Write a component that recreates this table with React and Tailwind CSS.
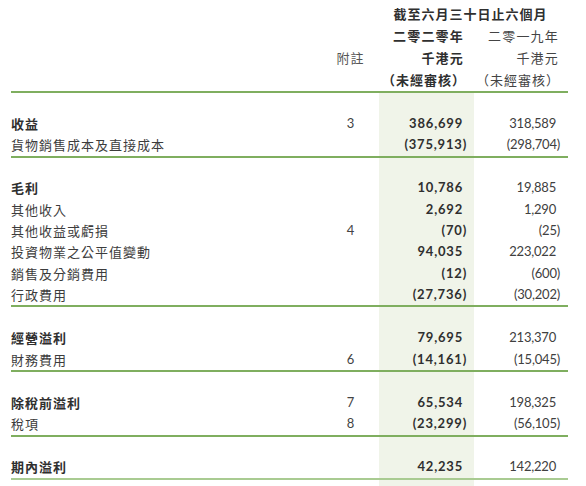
const rows = [
  { spacer: true },
  { label: '收益', note: '3', cur: '386,699', prev: '318,589', bold: true },
  { label: '貨物銷售成本及直接成本', cur: '(375,913)', prev: '(298,704)', line: 'dark' },
  { spacer: true },
  { label: '毛利', cur: '10,786', prev: '19,885', bold: true },
  { label: '其他收入', cur: '2,692', prev: '1,290' },
  { label: '其他收益或虧損', note: '4', cur: '(70)', prev: '(25)' },
  { label: '投資物業之公平值變動', cur: '94,035', prev: '223,022' },
  { label: '銷售及分銷費用', cur: '(12)', prev: '(600)' },
  { label: '行政費用', cur: '(27,736)', prev: '(30,202)', line: 'dark' },
  { spacer: true },
  { label: '經營溢利', cur: '79,695', prev: '213,370', bold: true },
  { label: '財務費用', note: '6', cur: '(14,161)', prev: '(15,045)', line: 'dark' },
  { spacer: true },
  { label: '除稅前溢利', note: '7', cur: '65,534', prev: '198,325', bold: true },
  { label: '稅項', note: '8', cur: '(23,299)', prev: '(56,105)', line: 'dark' },
  { spacer: true },
  { label: '期內溢利', cur: '42,235', prev: '142,220', bold: true, line: 'light' },
  { spacer: true, tail: true },
]

const cjk = "font-['Noto_Sans_CJK_TC','Noto_Sans_CJK_SC',sans-serif]"
const num = "font-['Lato','Open_Sans',sans-serif]"

// paren values hang a bit to the right
const Num = ({ v, bold }) => {
  const paren = v.startsWith('(')
  return (
    <span className={`${num} text-[13px] ${bold ? 'font-bold tracking-[0.8px] text-[#2f2f2f]' : 'text-[#404040] tracking-[-0.2px]'} ${paren ? '' : 'pr-[4px]'}`}>
      {v}
    </span>
  )
}

const Row = ({ r }) => {
  if (r.spacer) {
    return (
      <div className={`grid grid-cols-[309px_59px_95px_94px] ${r.tail ? 'h-[10px]' : 'h-[20px]'}`}>
        <div />
        <div />
        <div className="bg-[#f0f4e9]" />
        <div />
      </div>
    )
  }
  const border =
    r.line === 'dark' ? 'border-b-2 border-[#7fae5f]' : r.line === 'light' ? 'border-b-2 border-[#a9cb92]' : ''
  return (
    <div className={`grid grid-cols-[309px_59px_95px_94px] ${border}`}>
      <div className={`${cjk} h-[21.3px] flex items-center text-[13px] tracking-[1px] ${r.bold ? 'font-bold text-[#2f2f2f]' : 'text-[#3c3c3c]'}`}>
        {r.label}
      </div>
      <div className={`${num} flex items-center justify-center text-[13px] text-[#444] pl-[2px]`}>{r.note}</div>
      <div className="bg-[#f0f4e9] flex items-center justify-end pr-[7px]">
        <Num v={r.cur} bold />
      </div>
      <div className="flex items-center justify-end pr-[8px]">
        <Num v={r.prev} />
      </div>
    </div>
  )
}

export default function App() {
  return (
    <div className="w-[586px] h-[486px] bg-white overflow-hidden pl-[11px]">
      <div className="w-[557px]">
        <div className={`${cjk} pt-[3px] border-b-2 border-[#7fae5f] text-[13px] tracking-[1px]`}>
          <div className="grid grid-cols-[309px_59px_189px] h-[22px] items-center">
            <div />
            <div />
            <div className="font-bold text-[#2f2f2f] text-center pr-[6px] tracking-[1px]">截至六月三十日止六個月</div>
          </div>
          <div className="grid grid-cols-[309px_59px_95px_94px] h-[22px] items-center">
            <div />
            <div />
            <div className="font-bold text-[#2f2f2f] text-right pr-[10px] tracking-[1.2px]">二零二零年</div>
            <div className="text-[#444] text-right pr-[9px] tracking-[1.2px]">二零一九年</div>
          </div>
          <div className="grid grid-cols-[309px_59px_95px_94px] h-[22px] items-center">
            <div />
            <div className="text-[#555] text-center pl-[2px]">附註</div>
            <div className="font-bold text-[#2f2f2f] text-right pr-[10px] tracking-[1.2px]">千港元</div>
            <div className="text-[#444] text-right pr-[9px] tracking-[1.2px]">千港元</div>
          </div>
          <div className="grid grid-cols-[309px_59px_95px_94px] h-[22px] items-center">
            <div />
            <div />
            <div className="font-bold text-[#2f2f2f] text-right pr-[8px] tracking-[1px]">（未經審核）</div>
            <div className="text-[#444] text-right pr-[8px] tracking-[1px]">（未經審核）</div>
          </div>
        </div>
        {rows.map((r, i) => (
          <Row key={i} r={r} />
        ))}
      </div>
    </div>
  )
}
